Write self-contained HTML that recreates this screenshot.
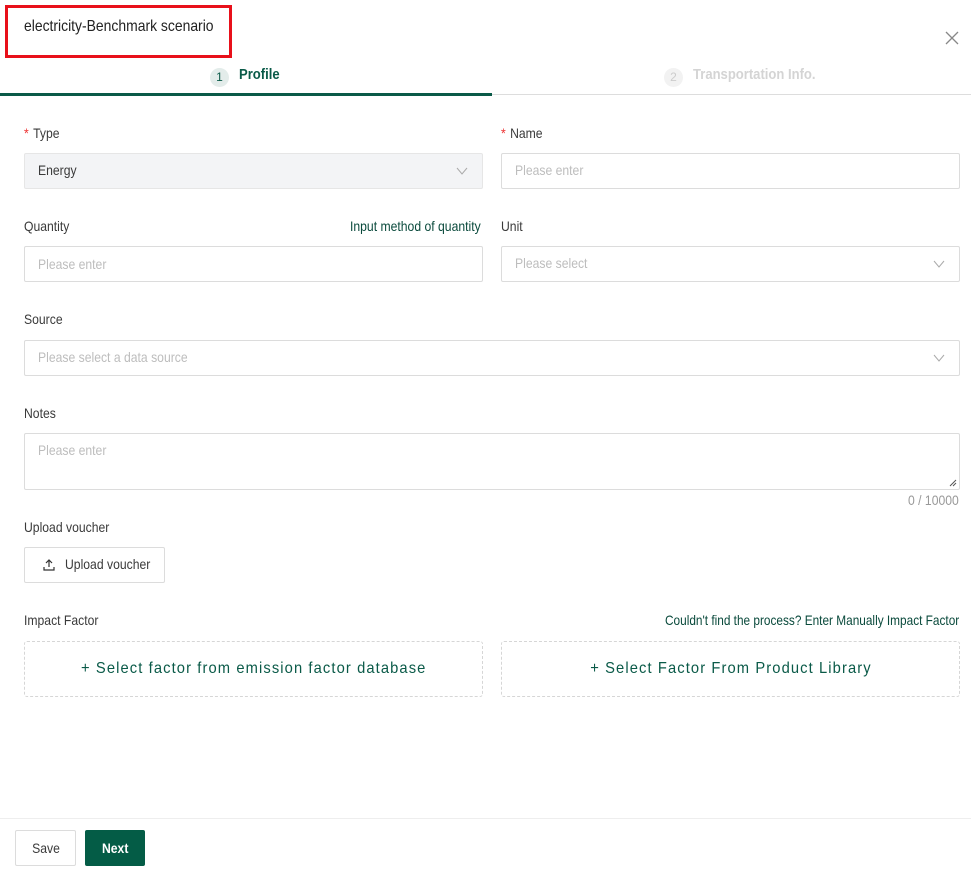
<!DOCTYPE html>
<html><head><meta charset="utf-8"><style>
*{box-sizing:border-box;margin:0;padding:0}
body{width:971px;height:869px;background:#fff;font-family:"Liberation Sans",sans-serif;font-size:14px;color:#3a3a3a;position:relative;overflow:hidden}
.a{position:absolute;white-space:nowrap;transform:scaleX(.87);transform-origin:left center}
.p{position:absolute}
.box{position:absolute;border:1px solid #dcdcdc;border-radius:2px;background:#fff}
.ph{color:#bdbdbd}
.star{color:#e33;margin-right:5px}
.chev{position:absolute;right:14px;top:10px}
.dash{position:absolute;border:1px dashed #d6d6d6;border-radius:3px;color:#0a5a48;font-size:16px;letter-spacing:1.2px;text-align:center;line-height:54px}
.dash span{display:inline-block;transform:scaleX(.92)}
</style></head><body>
<div class="p" style="left:5px;top:5px;width:227px;height:53px;border:3px solid #e8101a"></div>
<div class="a" style="left:24px;top:18px;font-size:16px;color:#222">electricity-Benchmark scenario</div>
<svg class="p" style="left:945px;top:31px" width="14" height="14" viewBox="0 0 14 14"><path d="M1 1L13 13M13 1L1 13" stroke="#888" stroke-width="1.3"/></svg>
<div class="p" style="left:210px;top:68px;width:19px;height:19px;border-radius:50%;background:#e3ecea;color:#0a5a48;font-size:12px;text-align:center;line-height:19px">1</div>
<div class="a" style="left:239px;top:66px;font-size:15px;font-weight:bold;color:#0a5a48">Profile</div>
<div class="p" style="left:664px;top:68px;width:19px;height:19px;border-radius:50%;background:#f2f2f2;color:#ccc;font-size:12px;text-align:center;line-height:19px">2</div>
<div class="a" style="left:693px;top:66px;font-size:15px;font-weight:bold;color:#d4d4d4">Transportation Info.</div>
<div class="p" style="left:0;top:94px;width:971px;height:1px;background:#ddd"></div>
<div class="p" style="left:0;top:93px;width:492px;height:3px;background:#0a5a48"></div>

<div class="a" style="left:24px;top:125px"><span class="star">*</span>Type</div>
<div class="a" style="left:501px;top:125px"><span class="star">*</span>Name</div>
<div class="box" style="left:24px;top:153px;width:459px;height:36px;background:#f3f4f6;border-color:#e6e6e6"><span class="a" style="left:13px;top:8px">Energy</span><svg class="chev" width="12" height="14" viewBox="0 0 12 14"><path d="M1 4L6 10L11 4" fill="none" stroke="#aaa"/></svg></div>
<div class="box" style="left:501px;top:153px;width:459px;height:36px"><span class="a ph" style="left:13px;top:8px">Please enter</span></div>

<div class="a" style="left:24px;top:218px">Quantity</div>
<div class="a" style="left:350px;top:218px;color:#0a4a3c">Input method of quantity</div>
<div class="a" style="left:501px;top:218px">Unit</div>
<div class="box" style="left:24px;top:246px;width:459px;height:36px"><span class="a ph" style="left:13px;top:9px">Please enter</span></div>
<div class="box" style="left:501px;top:246px;width:459px;height:36px"><span class="a ph" style="left:13px;top:8px">Please select</span><svg class="chev" width="12" height="14" viewBox="0 0 12 14"><path d="M1 4L6 10L11 4" fill="none" stroke="#aaa"/></svg></div>

<div class="a" style="left:24px;top:311px">Source</div>
<div class="box" style="left:24px;top:340px;width:936px;height:36px"><span class="a ph" style="left:13px;top:8px">Please select a data source</span><svg class="chev" width="12" height="14" viewBox="0 0 12 14"><path d="M1 4L6 10L11 4" fill="none" stroke="#aaa"/></svg></div>

<div class="a" style="left:24px;top:405px">Notes</div>
<div class="box" style="left:24px;top:433px;width:936px;height:57px"><span class="a ph" style="left:13px;top:8px">Please enter</span><svg class="p" style="right:2px;bottom:2px" width="8" height="8" viewBox="0 0 8 8"><path d="M1 7L7 1M4 7L7 4" stroke="#555"/></svg></div>
<div class="a" style="left:908px;top:492px;color:#999">0 / 10000</div>

<div class="a" style="left:24px;top:519px">Upload voucher</div>
<div class="box" style="left:24px;top:547px;width:141px;height:36px"><svg class="p" style="left:18px;top:11px" width="12" height="12" viewBox="0 0 12 12"><path d="M6 1V8M3 4L6 1L9 4M1 8V11H11V8" fill="none" stroke="#333" stroke-width="1.2"/></svg><span class="a" style="left:40px;top:8px">Upload voucher</span></div>

<div class="a" style="left:24px;top:612px">Impact Factor</div>
<div class="a" style="left:665px;top:612px;color:#0a4a3c;transform:scaleX(.845)">Couldn't find the process? Enter Manually Impact Factor</div>
<div class="dash" style="left:24px;top:641px;width:459px;height:56px"><span>+ Select factor from emission factor database</span></div>
<div class="dash" style="left:501px;top:641px;width:459px;height:56px"><span>+ Select Factor From Product Library</span></div>

<div class="p" style="left:0;top:818px;width:971px;height:1px;background:#eee"></div>
<div class="box" style="left:15px;top:830px;width:61px;height:36px;text-align:center;line-height:34px"><span style="display:inline-block;transform:scaleX(.87)">Save</span></div>
<div class="p" style="left:85px;top:830px;width:60px;height:36px;background:#045c46;border-radius:2px;color:#fff;font-weight:bold;text-align:center;line-height:36px"><span style="display:inline-block;transform:scaleX(.87)">Next</span></div>
</body></html>
